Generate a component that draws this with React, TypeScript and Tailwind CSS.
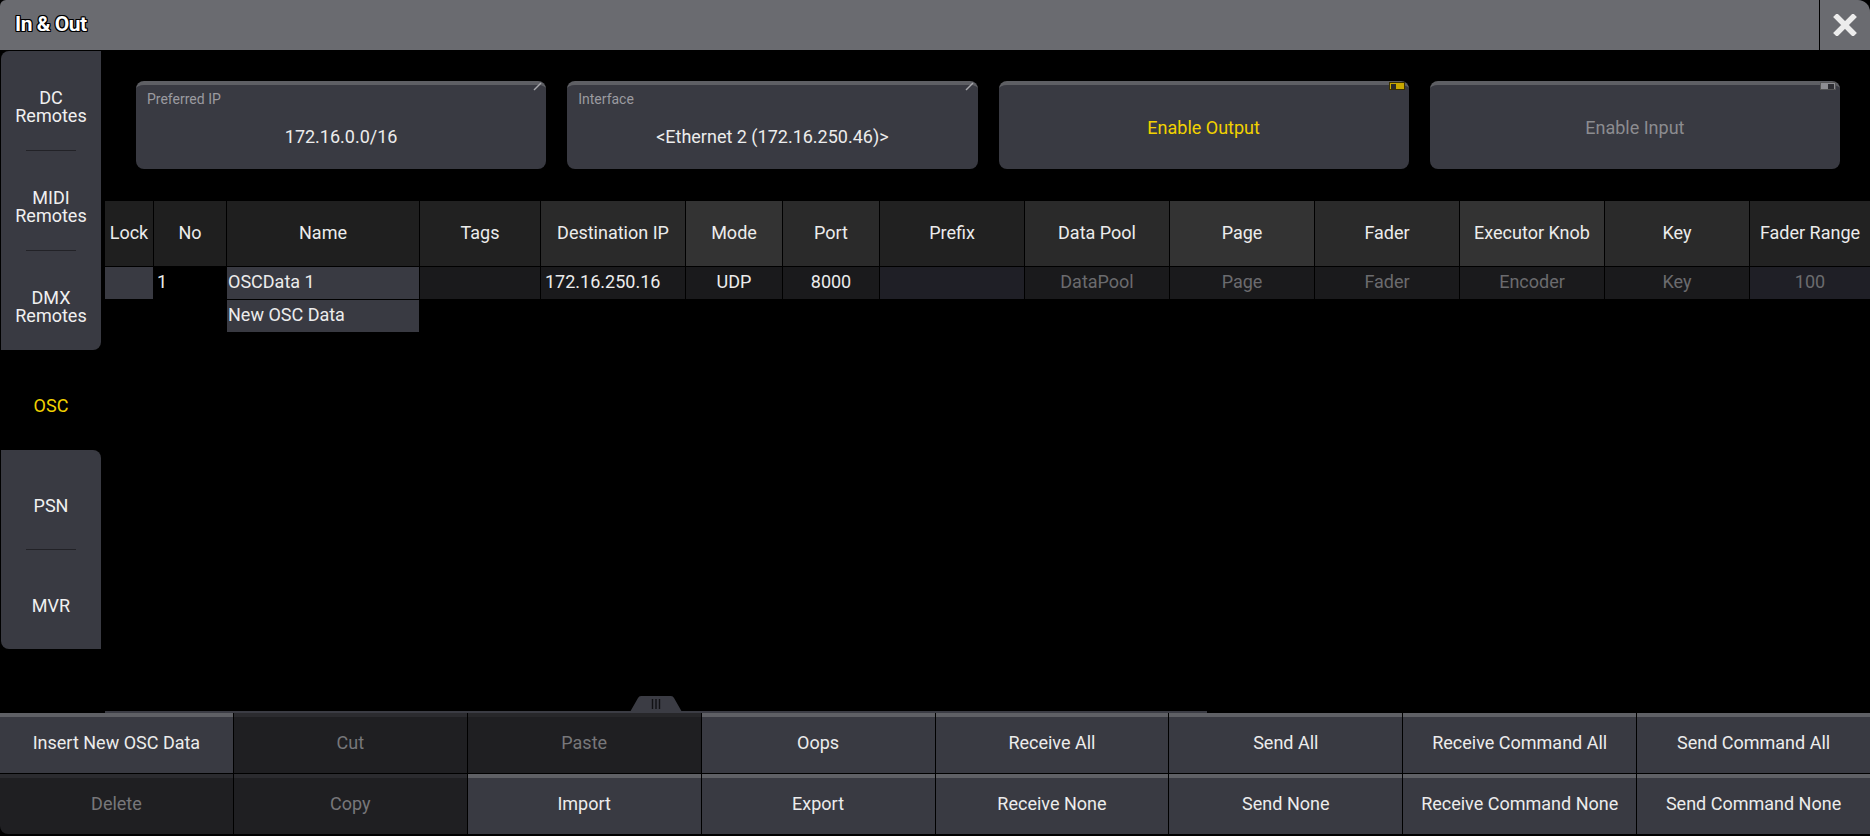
import React from 'react';

type Cell = { text?: string; bg: string; tone?: string; align?: string };

// column headers of the OSC data table
const headers: { title: string; bg: string }[] = [
  { title: 'Lock', bg: 'bg-[#1f1f1f]' },
  { title: 'No', bg: 'bg-[#1f1f1f]' },
  { title: 'Name', bg: 'bg-[#1f1f1f]' },
  { title: 'Tags', bg: 'bg-[#212121]' },
  { title: 'Destination IP', bg: 'bg-[#2a2a2a]' },
  { title: 'Mode', bg: 'bg-[#333333]' },
  { title: 'Port', bg: 'bg-[#2a2a2a]' },
  { title: 'Prefix', bg: 'bg-[#212121]' },
  { title: 'Data Pool', bg: 'bg-[#2a2a2a]' },
  { title: 'Page', bg: 'bg-[#333333]' },
  { title: 'Fader', bg: 'bg-[#2a2a2a]' },
  { title: 'Executor Knob', bg: 'bg-[#333333]' },
  { title: 'Key', bg: 'bg-[#2a2a2a]' },
  { title: 'Fader Range', bg: 'bg-[#222222]' },
];

const dim = 'text-[#6b6b6e]';

const firstRow: Cell[] = [
  { bg: 'bg-[#393a42]' },
  { text: '1', bg: 'bg-black', align: 'justify-start pl-[3px]' },
  { text: 'OSCData 1', bg: 'bg-[#393a42]', align: 'justify-start pl-px' },
  { bg: 'bg-[#1a1a1c]' },
  { text: '172.16.250.16', bg: 'bg-[#1a1a1c]', align: 'justify-start pl-1' },
  { text: 'UDP', bg: 'bg-[#1a1a1c]' },
  { text: '8000', bg: 'bg-[#1a1a1c]' },
  { bg: 'bg-[#1f1f26]' },
  { text: 'DataPool', bg: 'bg-[#1a1a1c]', tone: dim },
  { text: 'Page', bg: 'bg-[#1a1a1c]', tone: dim },
  { text: 'Fader', bg: 'bg-[#1a1a1c]', tone: dim },
  { text: 'Encoder', bg: 'bg-[#1a1a1c]', tone: dim },
  { text: 'Key', bg: 'bg-[#1a1a1c]', tone: dim },
  { text: '100', bg: 'bg-[#1f1f26]', tone: dim },
];

const actions: { label: string; on: boolean; extra?: string }[] = [
  { label: 'Insert New OSC Data', on: true },
  { label: 'Cut', on: false },
  { label: 'Paste', on: false, extra: 'bg-[#1b1b1e] border-[#27272a]' },
  { label: 'Oops', on: true },
  { label: 'Receive All', on: true },
  { label: 'Send All', on: true },
  { label: 'Receive Command All', on: true },
  { label: 'Send Command All', on: true },
  { label: 'Delete', on: false, extra: 'rounded-bl-lg' },
  { label: 'Copy', on: false },
  { label: 'Import', on: true },
  { label: 'Export', on: true },
  { label: 'Receive None', on: true },
  { label: 'Send None', on: true },
  { label: 'Receive Command None', on: true },
  { label: 'Send Command None', on: true },
];

const EditMark = () => (
  <svg className="absolute -top-[3px] right-[4px]" width="9" height="9" viewBox="0 0 9 9">
    <line x1="1" y1="8" x2="8" y2="1" stroke="#a8a8ac" strokeWidth="1.4" />
  </svg>
);

const FieldButton = ({ label, value }: { label: string; value: string }) => (
  <div className="relative flex h-[88px] flex-col rounded-lg border-t-4 border-[#5e5f64] bg-[#393a42] px-[11px] pt-[6px]">
    <EditMark />
    <span className="text-[14px] leading-4 text-[#9b9ba0]">{label}</span>
    <span className="mt-[20px] text-center text-[18px] leading-5 text-[#ececec]">{value}</span>
  </div>
);

const ToggleButton = ({ label, on }: { label: string; on: boolean }) => (
  <div className="relative flex h-[88px] items-center justify-center rounded-lg border-t-4 border-[#5e5f64] bg-[#393a42]">
    {on ? (
      <div className="absolute -top-[3px] right-[4px] flex h-[8px] w-[16px] items-center border border-[#3a3000] bg-[#c9a800] pl-px">
        <div className="h-[5px] w-[5px] bg-[#2a2a2a]" />
      </div>
    ) : (
      <div className="absolute -top-[3px] right-[4px] flex h-[8px] w-[16px] items-center justify-end border border-[#555] bg-[#8e8e92] pr-px">
        <div className="h-[5px] w-[6px] bg-[#2d2d32]" />
      </div>
    )}
    <span className={on ? 'text-[18px] text-[#f2d200]' : 'text-[18px] text-[#8c8c90]'}>{label}</span>
  </div>
);

const SideItem = ({ children, active }: { children: React.ReactNode; active?: boolean }) => (
  <div
    className={
      active
        ? 'flex h-[100px] items-center justify-center pt-3 text-center text-[18px] leading-[18px] text-[#f2d200]'
        : 'flex h-[99px] items-center justify-center pt-3 text-center text-[18px] leading-[18px] text-[#f0f0f0]'
    }
  >
    {children}
  </div>
);

const SideRule = () => (
  <div className="flex h-px justify-center">
    <div className="h-px w-[50px] bg-[#222227]" />
  </div>
);

export default function App() {
  return (
    <div className="flex h-[836px] w-[1870px] flex-col overflow-hidden bg-black font-['Roboto',sans-serif]">
      {/* window title */}
      <div className="flex h-[50px] shrink-0 items-center rounded-tl-md rounded-tr-xl bg-[#6a6b70]">
        <span className="flex-1 pl-[15px] text-[21px] font-bold tracking-[-0.5px] text-white [text-shadow:-1px_0_#000,1px_0_#000,0_-1px_#000,0_1px_#000,1px_1px_#000,-1px_-1px_#000,1px_-1px_#000,-1px_1px_#000]">
          In &amp; Out
        </span>
        <div className="flex h-full w-[51px] items-center justify-center border-l border-black">
          <svg width="24" height="22" viewBox="0 0 24 22">
            <path d="M4 3 L20 19 M20 3 L4 19" stroke="#ececec" strokeWidth="5.5" strokeLinecap="square" />
          </svg>
        </div>
      </div>

      <div className="flex h-[663px] shrink-0">
        {/* protocol tabs */}
        <div className="w-[101px] shrink-0 pl-px pt-px">
          <div className="rounded-tl-lg rounded-br-lg bg-[#393a42]">
            <SideItem>
              DC
              <br />
              Remotes
            </SideItem>
            <SideRule />
            <SideItem>
              MIDI
              <br />
              Remotes
            </SideItem>
            <SideRule />
            <SideItem>
              DMX
              <br />
              Remotes
            </SideItem>
          </div>
          <SideItem active>OSC</SideItem>
          <div className="rounded-tr-lg rounded-bl-lg bg-[#393a42]">
            <SideItem>PSN</SideItem>
            <SideRule />
            <SideItem>MVR</SideItem>
          </div>
        </div>

        <div className="flex flex-1 flex-col">
          <div className="grid grid-cols-4 gap-[21px] pl-[35px] pr-[30px] pt-[31px]">
            <FieldButton label="Preferred IP" value="172.16.0.0/16" />
            <FieldButton label="Interface" value="<Ethernet 2 (172.16.250.46)>" />
            <ToggleButton label="Enable Output" on />
            <ToggleButton label="Enable Input" on={false} />
          </div>

          {/* OSC data table */}
          <div className="ml-[4px] mt-[32px] grid grid-cols-[48px_72px_192px_120px_144px_96px_96px_144px_144px_144px_144px_144px_144px_120px] grid-rows-[65px_32px_32px] gap-px text-[18px] text-[#ececec]">
            {headers.map((h) => (
              <div key={h.title} className={`flex items-center justify-center whitespace-nowrap pb-[3px] ${h.bg}`}>
                {h.title}
              </div>
            ))}
            {firstRow.map((c, i) => (
              <div key={i} className={`flex items-center whitespace-nowrap pb-[3px] ${c.align ?? 'justify-center'} ${c.bg} ${c.tone ?? ''}`}>
                {c.text}
              </div>
            ))}
            <div />
            <div />
            <div className="flex items-center bg-[#393a42] pb-[3px] pl-px">New OSC Data</div>
          </div>

          {/* horizontal scroll bar */}
          <div className="relative ml-[4px] mt-auto h-[16px] w-[1102px]">
            <svg className="absolute bottom-[1px] left-[525px]" width="52" height="16" viewBox="0 0 52 16">
              <path d="M0 16 L8 2 Q9 0 11 0 L41 0 Q43 0 44 2 L52 16 Z" fill="#3b3c44" />
              <path d="M22.5 3 V13 M26 3 V13 M29.5 3 V13" stroke="#111114" strokeWidth="1.4" />
            </svg>
            <div className="absolute bottom-0 left-0 h-[2px] w-full bg-[#3b3c44]" />
          </div>
        </div>
      </div>

      {/* command buttons */}
      <div className="grid shrink-0 grid-cols-8 grid-rows-[60px_60px] gap-px pb-[2px]">
        {actions.map((a) => (
          <div
            key={a.label}
            className={`flex items-center justify-center border-t-4 pb-[5px] text-[18px] ${
              a.on
                ? 'border-[#5f6065] bg-[#393a42] text-[#ececec]'
                : 'border-[#2b2b2f] bg-[#1f1f22] text-[#77777a]'
            } ${a.extra ?? ''}`}
          >
            {a.label}
          </div>
        ))}
      </div>
    </div>
  );
}
